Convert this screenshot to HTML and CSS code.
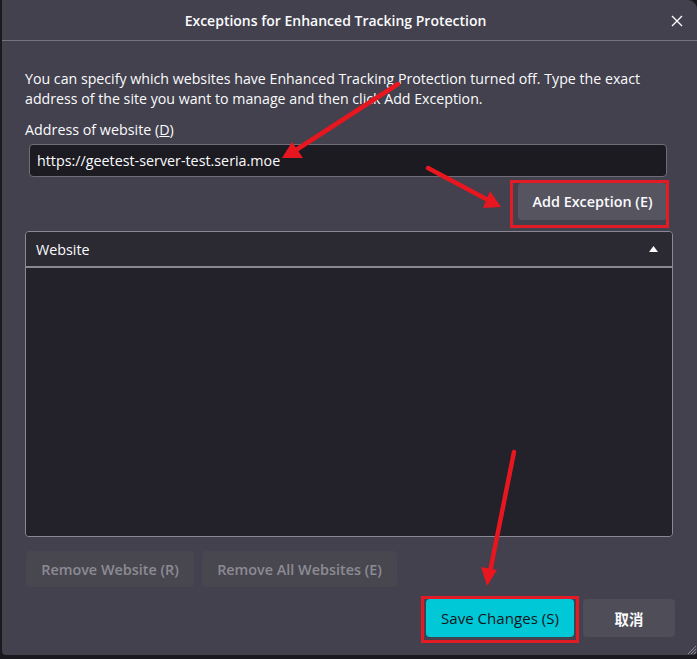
FILE: index.html
```html
<!DOCTYPE html>
<html>
<head>
<meta charset="utf-8">
<link rel="stylesheet" href="styles.css">
</head>
<body>
<div class="dialog">
  <div class="titlebar">
    <div class="title">Exceptions for Enhanced Tracking Protection</div>
    <svg class="close" width="12" height="12" viewBox="0 0 12 12"><path d="M1 1L11 11M11 1L1 11" stroke="#fbfbfe" stroke-width="1.4" fill="none"/></svg>
  </div>
  <div class="content">
    <p class="desc">You can specify which websites have Enhanced Tracking Protection turned off. Type the exact address of the site you want to manage and then click Add Exception.</p>
    <div class="label">Address of website (<u>D</u>)</div>
    <div class="input">https://geetest-server-test.seria.moe</div>
    <div class="addrow"><button class="btn add">Add Exception (E)</button></div>
    <div class="tree">
      <div class="treehead"><span>Website</span><svg width="9" height="6" viewBox="0 0 9 6"><path d="M0 6L4.5 0L9 6Z" fill="#fbfbfe"/></svg></div>
      <div class="treebody"></div>
    </div>
    <div class="removerow">
      <button class="btn dis w1">Remove Website (R)</button>
      <button class="btn dis w2">Remove All Websites (E)</button>
    </div>
    <div class="footer">
      <button class="btn primary">Save Changes (S)</button>
      <button class="btn cancel">取消</button>
    </div>
  </div>
  <svg class="grip" width="12" height="12" viewBox="0 0 12 12"><path d="M11 3L3 11M11 6L6 11M11 9L9 11" stroke="#8f8f9d" stroke-width="1"/></svg>
</div>
<svg class="overlay" width="697" height="659" viewBox="0 0 697 659">
  <g fill="none" stroke="#e21b24" stroke-width="3">
    <rect x="511.5" y="181.5" width="156" height="45"/>
    <rect x="422.5" y="597.5" width="155" height="44"/>
  </g>
  <g stroke="#e8161f" stroke-width="4.5" stroke-linecap="round" fill="#e8161f">
    <line x1="398" y1="84" x2="296" y2="150"/>
    <line x1="428" y1="168" x2="488" y2="200"/>
    <line x1="514" y1="452" x2="490" y2="572"/>
  </g>
  <g fill="#e8161f">
    <polygon points="282,158 292,142 303,158"/>
    <polygon points="501,207 483,208 490,191"/>
    <polygon points="487,586 481,567 497,570"/>
  </g>
</svg>
</body>
</html>
```

FILE: styles.css
```css
html, body { margin: 0; padding: 0; }
body {
  background: #1a1920;
  width: 697px;
  height: 659px;
  overflow: hidden;
  font-family: "Open Sans", "Noto Sans CJK SC", sans-serif;
  color: #fbfbfe;
  position: relative;
}
.dialog {
  margin-left: 2px;
  width: 695px;
  height: 655px;
  background: #42414d;
  border-radius: 0 9px 4px 4px;
  position: relative;
}
.titlebar {
  height: 41px;
  border-bottom: 1px solid #75747e;
  display: flex;
  align-items: center;
  justify-content: center;
  padding-right: 28px;
  padding-top: 1px;
  box-sizing: border-box;
  position: relative;
}
.title {
  font-size: 14px;
  font-weight: 600;
}
.close {
  position: absolute;
  right: 14px;
  top: 15px;
}
.content {
  padding: 28px 24px 0 23px;
  display: flex;
  flex-direction: column;
}
.desc {
  margin: 0;
  font-size: 14.2px;
  line-height: 20px;
}
.label {
  margin-top: 11px;
  font-size: 14.3px;
  line-height: 20px;
}
.input {
  margin: 4px 6px 0 4px;
  height: 31px;
  background: #1c1b22;
  border: 1px solid #6f6e78;
  border-radius: 4px;
  padding-left: 7px;
  font-size: 14.3px;
  line-height: 31px;
}
.addrow {
  display: flex;
  justify-content: flex-end;
  margin-top: 6px;
  padding-right: 6px;
}
.btn {
  font-family: "Open Sans", "Noto Sans CJK SC", sans-serif;
  border: none;
  border-radius: 4px;
  font-size: 14.4px;
  font-weight: 600;
  color: #fbfbfe;
  padding: 0;
}
.add {
  width: 149px;
  height: 37px;
  background: #55545f;
}
.tree {
  margin-top: 11px;
  height: 304px;
  border: 1px solid #8a8993;
  border-radius: 4px;
  display: flex;
  flex-direction: column;
  overflow: hidden;
}
.treehead {
  height: 34px;
  background: #2b2a33;
  border-bottom: 2px solid #8a8993;
  display: flex;
  align-items: center;
  justify-content: space-between;
  padding: 0 14px 0 10px;
  font-size: 14.3px;
}
.treebody {
  flex: 1;
  background: #23222b;
}
.removerow {
  margin-top: 14px;
  display: flex;
  gap: 8px;
  padding-left: 1px;
}
.dis {
  height: 36px;
  background: #48474f;
  color: #8c8b93;
}
.w1 { width: 168px; }
.w2 { width: 195px; }
.footer {
  margin-top: 12px;
  display: flex;
  justify-content: flex-end;
  gap: 9px;
  margin-right: -2px;
}
.primary {
  width: 148px;
  height: 38px;
  background: #00c8d7;
  color: #15141a;
  font-size: 15.1px;
  font-weight: 500;
}
.cancel {
  width: 92px;
  height: 38px;
  background: #4e4d58;
  font-weight: 700;
}
.grip {
  position: absolute;
  right: 0;
  bottom: 0;
}
.overlay {
  position: absolute;
  left: 0;
  top: 0;
  pointer-events: none;
}
```
